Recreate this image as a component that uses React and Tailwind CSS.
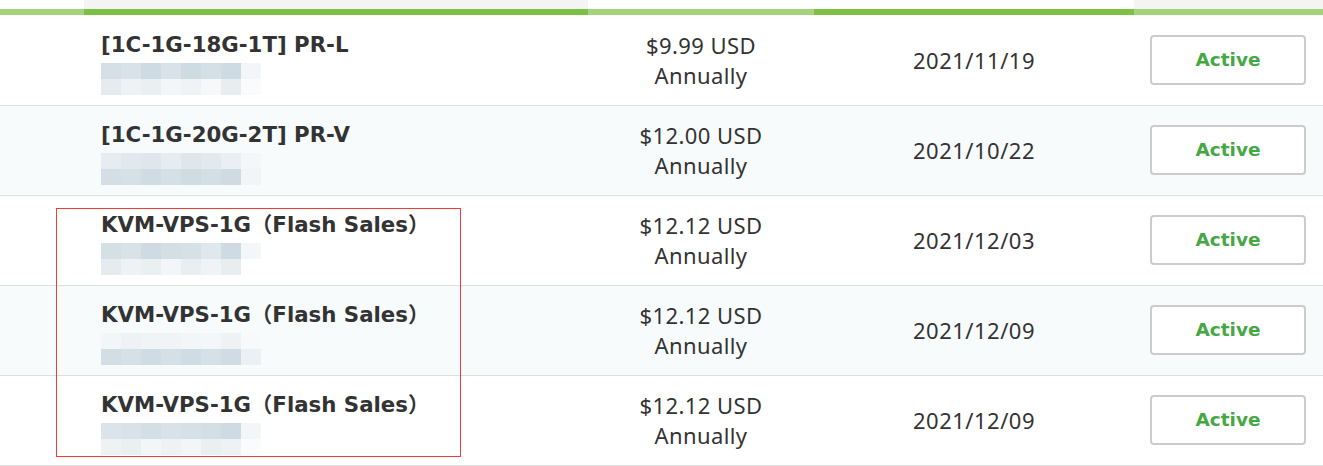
import React from "react";

const rows = [
  { name: "[1C-1G-18G-1T] PR-L", price: "$9.99 USD", date: "2021/11/19", alt: false,
    blur: [["#d5dfe6","#d8e2e8","#cfdbe3","#d8e2e8","#cfdbe3","#d5e0e6","#cfdbe3","#f2f6f8"],["#e5ebef","#eef2f5","#eaeff2","#f3f6f8","#f0f3f6","#f6f8f9","#e8edf0","#fafbfc"]] },
  { name: "[1C-1G-20G-2T] PR-V", price: "$12.00 USD", date: "2021/10/22", alt: true,
    blur: [["#e6edf1","#e2e9ee","#dfe7ec","#e6edf1","#dfe7ec","#e3eaee","#e9eff2","#f4f7f9"],["#d3dee5","#d6e0e7","#d0dce3","#d5dfe6","#d0dce3","#d3dee5","#cfdae2","#f1f5f7"]] },
  { name: "KVM-VPS-1G（Flash Sales）", price: "$12.12 USD", date: "2021/12/03", alt: false,
    blur: [["#d5dfe6","#d8e2e8","#cfdbe3","#d3dee5","#d6e0e7","#e0e8ed","#cfdbe3","#f4f7f9"],["#e5ebef","#eef2f5","#eaeff2","#f3f6f8","#e9eef1","#f0f3f6","#e8edf0","#ffffff"]] },
  { name: "KVM-VPS-1G（Flash Sales）", price: "$12.12 USD", date: "2021/12/09", alt: true,
    blur: [["#f3f6f8","#eef2f5","#f0f4f6","#f1f4f6","#f3f6f8","#f4f7f9","#eef2f5","#f7f9fa"],["#d2dde4","#d6e0e7","#d0dce3","#d5dfe6","#d0dce3","#d6e0e7","#d0dbe3","#eaf0f3"]] },
  { name: "KVM-VPS-1G（Flash Sales）", price: "$12.12 USD", date: "2021/12/09", alt: false,
    blur: [["#dbe4ea","#d9e2e8","#d3dee5","#d8e2e8","#d6e0e7","#d3dee5","#cfdbe3","#f2f6f8"],["#eef2f5","#eaeff2","#f3f6f8","#eef2f5","#f3f6f8","#eaeff2","#eef2f5","#fafbfc"]] },
];

function Blur({ cells }) {
  return (
    <div className="flex flex-col mt-[5px]">
      {cells.map((r, i) => (
        <div key={i} className="flex">
          {r.map((c, j) => (
            <div key={j} className="w-[20px] h-[16px]" style={{ backgroundColor: c }} />
          ))}
        </div>
      ))}
    </div>
  );
}

export default function App() {
  const nameFont = { fontFamily: '"DejaVu Sans", "Noto Sans CJK SC", sans-serif' };
  const bodyFont = { fontFamily: '"Noto Sans", "Noto Sans CJK SC", sans-serif' };
  return (
    <div className="relative w-[1323px] h-[466px] bg-white overflow-hidden">
      {/* header remnant */}
      <div className="grid grid-cols-[84px_504px_226px_320px_1fr]">
        <div className="h-[15px] bg-white border-b-[6px] border-[#a3d47b]" />
        <div className="h-[15px] bg-[#f4f4f4] border-b-[6px] border-[#7cc143]" />
        <div className="h-[15px] bg-white border-b-[6px] border-[#a3d47b]" />
        <div className="h-[15px] bg-white border-b-[6px] border-[#7cc143]" />
        <div className="h-[15px] bg-[#f4f4f4] border-b-[6px] border-[#a3d47b]" />
      </div>
      <div className="h-[1px] bg-white" />
      {rows.map((r, i) => (
        <div
          key={i}
          className={`grid grid-cols-[84px_504px_226px_320px_1fr] h-[90px] border-b border-[#dedede] ${r.alt ? "bg-[#f7fbfc]" : "bg-white"}`}
        >
          <div />
          <div className="pl-[17px] pt-[16px]">
            <div className="text-[21.3px] leading-[26px] font-bold text-[#333333]" style={nameFont}>
              {r.name}
            </div>
            <Blur cells={r.blur} />
          </div>
          <div className="flex flex-col items-center justify-center text-[22px] leading-[30px] tracking-[0.4px] text-[#333333] pb-[2px]" style={bodyFont}>
            <div>{r.price}</div>
            <div>Annually</div>
          </div>
          <div className="flex items-center justify-center text-[22px] tracking-[0.5px] text-[#333333]" style={bodyFont}>
            {r.date}
          </div>
          <div className="flex items-center pl-[16px] pb-[2px]">
            <div
              className="w-[156px] h-[50px] border-2 border-[#cccccc] rounded-[4px] bg-white flex items-center justify-center text-[18.5px] font-bold text-[#45a845]"
              style={nameFont}
            >
              Active
            </div>
          </div>
        </div>
      ))}
      <div className="absolute left-[56px] top-[208px] w-[405px] h-[249px] border border-[#ee3b3b] pointer-events-none" />
    </div>
  );
}
